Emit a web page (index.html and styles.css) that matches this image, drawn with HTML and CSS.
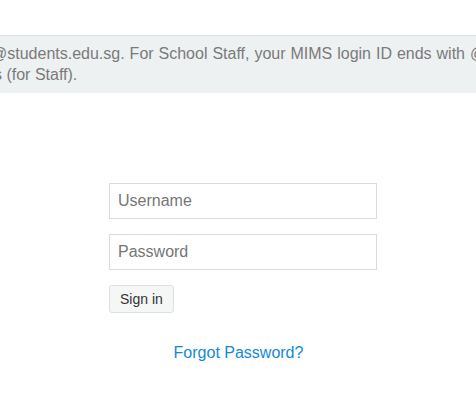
FILE: index.html
```html
<!DOCTYPE html>
<html lang="en">
<head>
<meta charset="utf-8">
<title>Sign in</title>
<link rel="stylesheet" href="styles.css">
</head>
<body>
<div class="notice">
  <p class="notice-text"><span class="line line-first">@students.edu.sg. For School Staff, your MIMS login ID ends with @</span><span class="line line-last">s (for Staff).</span></p>
</div>
<main class="login">
  <form class="login-form">
    <input class="field" type="text" placeholder="Username">
    <input class="field" type="password" placeholder="Password">
    <button class="btn" type="button">Sign in</button>
  </form>
  <div class="forgot"><a href="#">Forgot Password?</a></div>
</main>
</body>
</html>
```
FILE: styles.css
```css
html, body {
  margin: 0;
  padding: 0;
  background: #ffffff;
  font-family: "Liberation Sans", Arial, sans-serif;
  font-size: 16px;
  overflow: hidden;
}

.notice {
  margin-top: 35px;
  border-top: 1px solid #dde2e4;
  background: #eef1f2;
  padding: 7px 0 8px;
  overflow: hidden;
}

.notice-text {
  margin: 0;
  color: #7a7a7a;
  line-height: 21px;
  white-space: nowrap;
}

.line {
  display: block;
}

.line-first {
  margin-left: -9px;
  word-spacing: 0.5px;
}

.line-last {
  margin-left: -6px;
}

.login {
  padding-top: 90px;
}

.login-form {
  width: 268px;
  margin-left: 109px;
  display: flex;
  flex-direction: column;
  align-items: flex-start;
}

.field {
  box-sizing: border-box;
  width: 268px;
  height: 36px;
  margin: 0 0 15px;
  padding: 0 8px;
  border: 1px solid #d6dcdd;
  border-radius: 0;
  font-family: "Liberation Sans", Arial, sans-serif;
  font-size: 16px;
  color: #555;
  outline: none;
}

.field::placeholder {
  color: #767676;
}

.btn {
  box-sizing: border-box;
  height: 28px;
  padding: 0 10px;
  border: 1px solid #dce1e2;
  border-radius: 3px;
  background: #f5f6f6;
  color: #333;
  font-family: "Liberation Sans", Arial, sans-serif;
  font-size: 14px;
}

.forgot {
  margin-top: 29px;
  text-align: center;
  line-height: 22px;
}

.forgot a {
  color: #1489d6;
  text-decoration: none;
  margin-left: 1px;
}
```
